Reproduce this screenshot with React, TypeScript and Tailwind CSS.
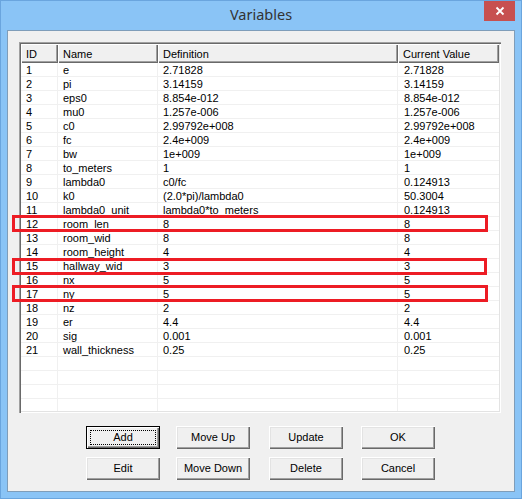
import React from "react";

const data: [string, string, string, string][] = [
  ["1", "e", "2.71828", "2.71828"],
  ["2", "pi", "3.14159", "3.14159"],
  ["3", "eps0", "8.854e-012", "8.854e-012"],
  ["4", "mu0", "1.257e-006", "1.257e-006"],
  ["5", "c0", "2.99792e+008", "2.99792e+008"],
  ["6", "fc", "2.4e+009", "2.4e+009"],
  ["7", "bw", "1e+009", "1e+009"],
  ["8", "to_meters", "1", "1"],
  ["9", "lambda0", "c0/fc", "0.124913"],
  ["10", "k0", "(2.0*pi)/lambda0", "50.3004"],
  ["11", "lambda0_unit", "lambda0*to_meters", "0.124913"],
  ["12", "room_len", "8", "8"],
  ["13", "room_wid", "8", "8"],
  ["14", "room_height", "4", "4"],
  ["15", "hallway_wid", "3", "3"],
  ["16", "nx", "5", "5"],
  ["17", "ny", "5", "5"],
  ["18", "nz", "2", "2"],
  ["19", "er", "4.4", "4.4"],
  ["20", "sig", "0.001", "0.001"],
  ["21", "wall_thickness", "0.25", "0.25"],
  ["", "", "", ""],
  ["", "", "", ""],
  ["", "", "", ""],
  ["", "", "", ""],
];

function Btn({ label, def }: { label: string; def?: boolean }) {
  if (def) {
    return (
      <div className="w-[74px] h-[23px] border border-[#000000] bg-[#f0f0f0] shadow-[inset_1px_1px_#ffffff,inset_-1px_-1px_#696969,inset_-2px_-2px_#a0a0a0] p-[3px] flex">
        <div className="flex-1 border border-dotted border-[#000000] flex items-center justify-center text-[11px] leading-[13px] text-black">
          {label}
        </div>
      </div>
    );
  }
  return (
    <div className="w-[74px] h-[23px] bg-[#f0f0f0] shadow-[inset_1px_1px_#ffffff,inset_-1px_-1px_#696969,inset_-2px_-2px_#a0a0a0,inset_2px_2px_#e3e3e3] flex items-center justify-center text-[11px] leading-[13px] text-black">
      {label}
    </div>
  );
}

export default function App() {
  const hdr =
    "h-full shadow-[inset_1px_1px_#ffffff,inset_-1px_-1px_#696969,inset_-2px_-2px_#a0a0a0] pl-[5px] pt-[4px] leading-[13px] whitespace-nowrap overflow-hidden";
  const cell = "pl-[5px] pt-[2px] leading-[11px] whitespace-nowrap";
  return (
    <div className="w-[522px] h-[499px] bg-[#8ac4f6] border border-[#6aa5de] flex flex-col font-['Liberation_Sans',Arial,sans-serif] text-[11px] text-black">
      <div className="h-[29px] grid grid-cols-[1fr_auto_1fr] items-start">
        <div />
        <div className="pt-[3px] leading-[20px] text-[14.5px] text-[#333333] font-['Noto_Sans',sans-serif]">
          Variables
        </div>
        <div className="flex justify-end pr-[6px]">
          <div className="w-[31px] h-[20px] bg-[#c75050] flex items-center justify-center">
            <svg width="10" height="10" viewBox="0 0 10 10">
              <path d="M1.5 1.5 L8.5 8.5 M8.5 1.5 L1.5 8.5" stroke="#ffffff" strokeWidth="1.8" fill="none" />
            </svg>
          </div>
        </div>
      </div>
      <div className="mx-[6px] mb-[6px] flex-1 border border-[#7f9db9] bg-[#f0f0f0] relative flex flex-col">
        <div className="ml-[11px] mt-[11px] w-[482px] h-[371px] bg-white shadow-[inset_1px_1px_#a0a0a0,inset_2px_2px_#696969,inset_-1px_-1px_#ffffff,inset_-2px_-2px_#e3e3e3] p-[2px]">
          <div className="w-full h-full overflow-hidden flex flex-col">
            <div className="h-[19px] flex bg-[#f0f0f0] shrink-0">
              <div className={"w-[37px] " + hdr}>ID</div>
              <div className={"w-[100px] " + hdr}>Name</div>
              <div className={"w-[240px] " + hdr}>Definition</div>
              <div className={"flex-1 " + hdr}>Current Value</div>
            </div>
            {data.map((r, i) => (
              <div key={i} className="h-[14px] shrink-0 flex border-b border-[#f0f0f0]">
                <div className={"w-[37px] border-r border-[#f0f0f0] " + cell}>{r[0]}</div>
                <div className={"w-[100px] border-r border-[#f0f0f0] " + cell}>{r[1]}</div>
                <div className={"w-[240px] border-r border-[#f0f0f0] " + cell}>{r[2]}</div>
                <div className="flex-1 pl-[6px] pt-[2px] leading-[11px] whitespace-nowrap">{r[3]}</div>
              </div>
            ))}
          </div>
        </div>
        <div className="mt-[13px] flex flex-col gap-[8px]">
          <div className="flex ml-[78px]">
            <Btn label="Add" def />
            <div className="ml-[16px]">
              <Btn label="Move Up" />
            </div>
            <div className="ml-[19px]">
              <Btn label="Update" />
            </div>
            <div className="ml-[18px]">
              <Btn label="OK" />
            </div>
          </div>
          <div className="flex ml-[78px]">
            <Btn label="Edit" />
            <div className="ml-[16px]">
              <Btn label="Move Down" />
            </div>
            <div className="ml-[19px]">
              <Btn label="Delete" />
            </div>
            <div className="ml-[18px]">
              <Btn label="Cancel" />
            </div>
          </div>
        </div>
        <div className="absolute left-[4px] top-[184px] w-[476px] h-[17px] border-[3px] border-[#ed1c24]" />
        <div className="absolute left-[4px] top-[227px] w-[475px] h-[17px] border-[3px] border-[#ed1c24]" />
        <div className="absolute left-[4px] top-[254px] w-[476px] h-[17px] border-[3px] border-[#ed1c24]" />
      </div>
    </div>
  );
}
